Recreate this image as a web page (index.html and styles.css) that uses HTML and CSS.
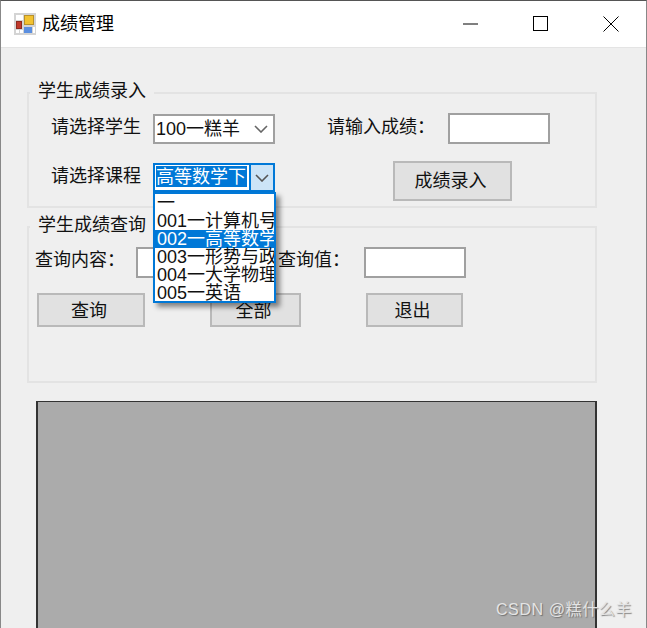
FILE: index.html
```html
<!DOCTYPE html>
<html lang="zh-CN">
<head>
<meta charset="utf-8">
<title>成绩管理</title>
<link rel="stylesheet" href="styles.css">
</head>
<body>
<div class="window">
  <header class="titlebar">
    <svg class="app-icon" width="22" height="22" viewBox="0 0 22 22">
      <rect x="0" y="0" width="22" height="22" fill="#d4d4d4"/>
      <rect x="2" y="2" width="7" height="5" fill="#fff"/>
      <rect x="10.5" y="2.5" width="9" height="9" fill="#f2c230" stroke="#b8912a"/>
      <rect x="2.5" y="8.5" width="5" height="7" fill="#c0392b" stroke="#8e2a20"/>
      <rect x="10" y="14" width="8" height="6" fill="#5b8fe0"/>
      <rect x="2" y="17" width="3" height="3" fill="#fff"/>
      <rect x="6" y="17" width="3" height="3" fill="#fff"/>
      <rect x="19" y="14" width="2" height="6" fill="#fff"/>
    </svg>
    <span class="title">成绩管理</span>
    <svg class="win-btn win-min" width="16" height="16" viewBox="0 0 16 16"><path d="M0 8H15" stroke="#000" stroke-width="1"/></svg>
    <svg class="win-btn win-max" width="16" height="16" viewBox="0 0 16 16"><rect x="0.5" y="0.5" width="14" height="14" fill="none" stroke="#000"/></svg>
    <svg class="win-btn win-close" width="16" height="16" viewBox="0 0 16 16"><path d="M0.5 0.5L15.5 15.5M15.5 0.5L0.5 15.5" stroke="#000" stroke-width="1" fill="none"/></svg>
  </header>

  <main class="client">
    <section class="group group-entry">
      <div class="legend">学生成绩录入</div>
      <div class="row row-student">
        <label class="lbl lbl-student">请选择学生</label>
        <div class="combo">
          <span class="combo-text">100一糕羊</span>
          <span class="combo-arrow"><svg width="14" height="8" viewBox="0 0 14 8"><path d="M1 1L7 7L13 1" fill="none" stroke="#666" stroke-width="1.6"/></svg></span>
        </div>
        <label class="lbl lbl-score">请输入成绩：</label>
        <input class="text-input" type="text">
      </div>
      <div class="row row-course">
        <label class="lbl lbl-student">请选择课程</label>
        <div class="combo combo-open">
          <span class="combo-text"><span class="combo-sel">高等数学下</span></span>
          <span class="combo-arrow"><svg width="14" height="8" viewBox="0 0 14 8"><path d="M1 1L7 7L13 1" fill="none" stroke="#555" stroke-width="1.6"/></svg></span>
          <ul class="dropdown">
            <li>一</li>
            <li>001一计算机号</li>
            <li class="selected">002一高等数学</li>
            <li>003一形势与政</li>
            <li>004一大学物理</li>
            <li>005一英语</li>
          </ul>
        </div>
        <button class="btn btn-entry">成绩录入</button>
      </div>
    </section>

    <section class="group group-query">
      <div class="legend">学生成绩查询</div>
      <div class="row row-query">
        <label class="lbl lbl-content">查询内容：</label>
        <input class="text-input input-content" type="text">
        <label class="lbl lbl-value">查询值：</label>
        <input class="text-input" type="text">
      </div>
      <div class="row row-actions">
        <button class="btn btn-query">查询</button>
        <button class="btn btn-all">全部</button>
        <button class="btn btn-exit">退出</button>
      </div>
    </section>

    <div class="grid-panel"></div>
  </main>
  <div class="watermark">CSDN @糕什么羊</div>
</div>
</body>
</html>
```
FILE: styles.css
```css
* { box-sizing: border-box; }
html, body { margin: 0; padding: 0; height: 100%; overflow: hidden; }
body {
  font-family: "Liberation Sans", "Noto Sans CJK SC", sans-serif;
  font-size: 18px;
  color: #111;
  background: #efefef;
}
.window {
  position: relative;
  width: 647px;
  height: 628px;
  overflow: hidden;
  border-top: 1px solid #555;
  border-left: 1px solid #888;
  border-right: 1px solid #888;
}
.titlebar {
  display: flex;
  align-items: center;
  height: 47px;
  background: #fff;
  border-bottom: 1px solid #e4e4e4;
  padding-left: 13px;
}
.app-icon { flex: none; margin-top: -1px; }
.title { margin-left: 6px; line-height: 24px; color: #000; }
.win-btn { flex: none; }
.win-min { margin-left: 349px; }
.win-max { margin-left: 54px; }
.win-close { margin-left: 54px; }

.client { padding: 44px 0 0 26px; }
.group {
  position: relative;
  width: 570px;
  border: 2px solid #e3e3e3;
}
.group-entry { height: 116px; padding-top: 19px; }
.group-query { height: 157px; margin-top: 18px; padding-top: 19px; }
.legend {
  position: absolute;
  left: 1px;
  top: -15px;
  padding: 0 8px;
  line-height: 24px;
  background: #efefef;
}
.row { display: flex; align-items: center; }
.row-student { height: 31px; }
.row-course { height: 40px; margin-top: 17px; align-items: flex-start; }
.row-query { height: 31px; }
.row-actions { margin-top: 15px; }

.lbl { flex: none; line-height: 24px; }
.lbl-student { width: 102px; margin-left: 22px; }
.row-student .lbl { padding-bottom: 3px; }
.row-course .lbl-student { margin-top: 3px; }
.lbl-score { width: 121px; margin-left: 52px; }
.lbl-content { width: 101px; margin-left: 6px; padding-bottom: 5px; }
.lbl-value { width: 86px; margin-left: 39px; padding-bottom: 5px; }

.combo {
  position: relative;
  flex: none;
  display: flex;
  width: 122px;
  height: 30px;
  background: #fff;
  border: 2px solid #a0a0a0;
}
.combo-text {
  flex: 1;
  padding-left: 1px;
  line-height: 26px;
  white-space: nowrap;
  overflow: hidden;
}
.combo-arrow {
  flex: none;
  display: flex;
  align-items: center;
  justify-content: center;
  width: 24px;
}
.combo-open {
  height: 29px;
  margin-top: 2px;
  border-color: #0078d7;
}
.combo-open .combo-text { padding: 1px; line-height: 23px; }
.combo-sel {
  display: block;
  width: 91px;
  height: 21px;
  color: #fff;
  background: #0078d7;
}
.combo-open .combo-arrow {
  background: #cce4f7;
  border-left: 2px solid #0078d7;
}
.dropdown {
  position: absolute;
  z-index: 2;
  top: 27px;
  left: -2px;
  width: 123px;
  height: 111px;
  margin: 0;
  padding: 0;
  list-style: none;
  background: #fff;
  border: 2px solid #0078d7;
  box-shadow: 4px 4px 5px rgba(0, 0, 0, 0.45);
  overflow: hidden;
}
.dropdown li {
  height: 18px;
  line-height: 19px;
  padding-left: 2px;
  white-space: nowrap;
  color: #111;
}
.dropdown li.selected {
  color: #fff;
  background: #0078d7;
}

.text-input {
  flex: none;
  width: 102px;
  height: 31px;
  padding: 0;
  background: #fff;
  border: 2px solid #a0a0a0;
  outline: 0;
}
.input-content { width: 103px; }

.btn {
  flex: none;
  padding: 0 4px 2px 0;
  font: inherit;
  color: #111;
  background: #e1e1e1;
  border: 2px solid #b9b9b9;
}
.btn-entry { width: 119px; height: 40px; margin-left: 118px; padding-bottom: 4px; }
.btn-query { width: 108px; height: 34px; margin-left: 8px; }
.btn-all { width: 91px; height: 34px; margin-left: 65px; }
.btn-exit { width: 97px; height: 34px; margin-left: 65px; }

.grid-panel {
  width: 561px;
  height: 300px;
  margin: 18px 0 0 9px;
  background: #ababab;
  border: 2px solid #333;
  border-width: 1.5px 2px;
}
.watermark {
  position: absolute;
  right: 14px;
  bottom: 8px;
  font-size: 16px;
  line-height: 20px;
  color: #e4e4e4;
  text-shadow: 1px 1px 1px rgba(90, 90, 90, 0.7);
  letter-spacing: 0.6px;
}
```
